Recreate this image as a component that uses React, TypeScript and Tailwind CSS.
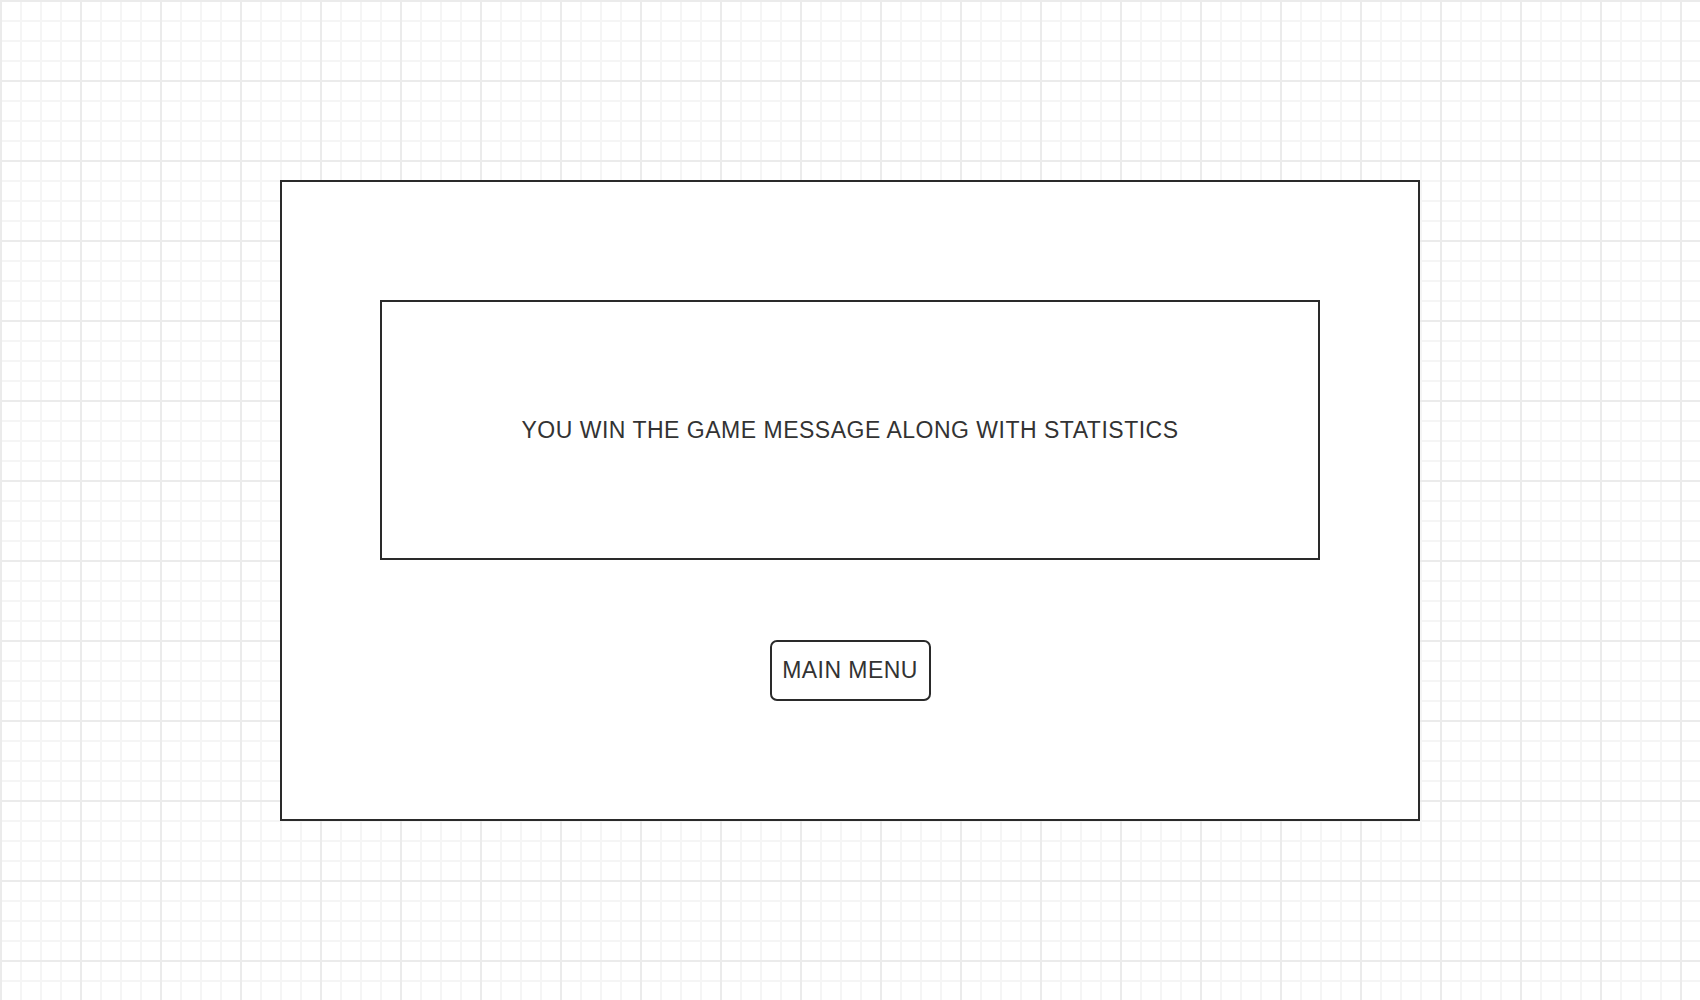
export default function App() {
  return (
    <div className="min-h-screen w-full bg-white bg-[linear-gradient(to_right,#ebebeb_2px,transparent_2px),linear-gradient(to_bottom,#ebebeb_2px,transparent_2px),linear-gradient(to_right,#f5f5f5_2px,transparent_2px),linear-gradient(to_bottom,#f5f5f5_2px,transparent_2px)] bg-[size:80px_80px,80px_80px,20px_20px,20px_20px] pt-[180px] pl-[280px] font-['Liberation_Sans',Arial,sans-serif] text-[#333]">
      <div className="flex h-[641px] w-[1140px] flex-col items-center border-2 border-[#2a2a2a] bg-white pt-[118px]">
        <div className="flex h-[260px] w-[940px] items-center justify-center border-2 border-[#2a2a2a]">
          <span className="text-[23px] tracking-[0.022em]">
            YOU WIN THE GAME MESSAGE ALONG WITH STATISTICS
          </span>
        </div>
        <button className="mt-[80px] flex h-[61px] w-[161px] items-center justify-center rounded-[7px] border-2 border-[#2a2a2a] bg-white text-[23px] tracking-[0.02em] text-[#333]">
          MAIN MENU
        </button>
      </div>
    </div>
  );
}
